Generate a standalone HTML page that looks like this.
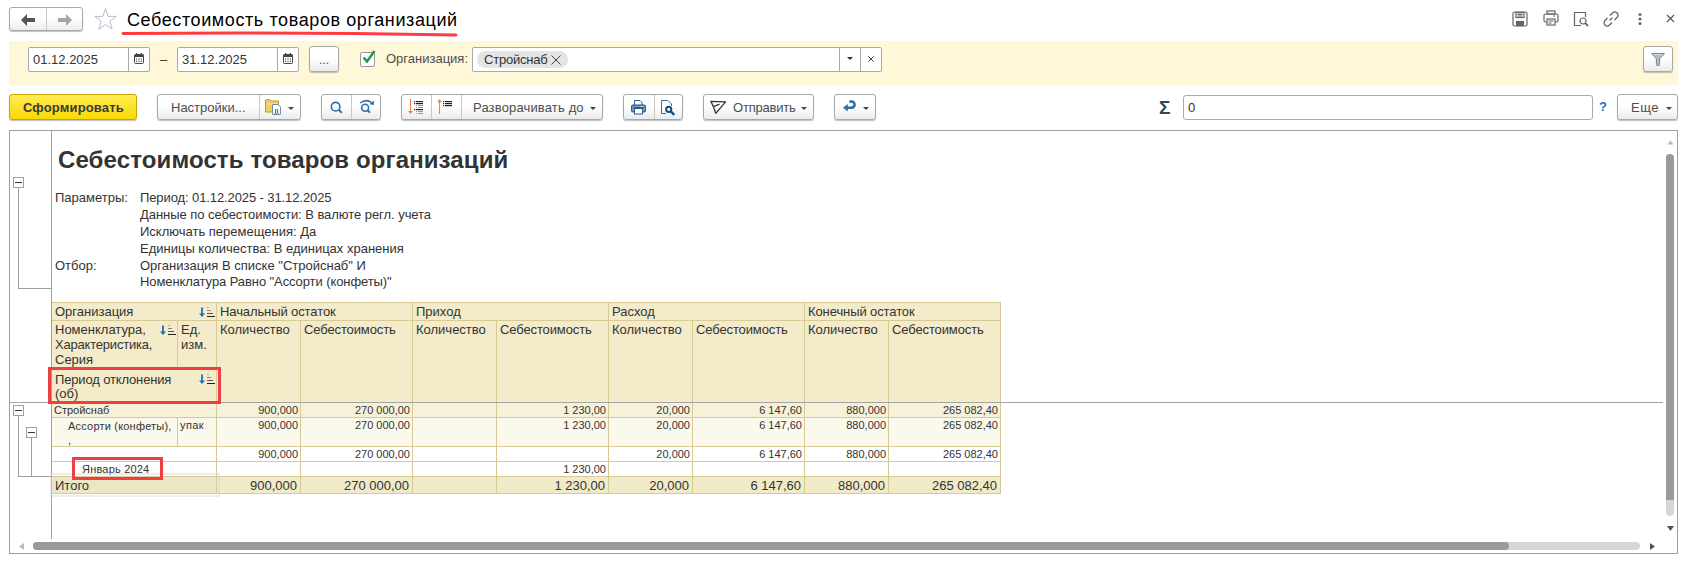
<!DOCTYPE html>
<html><head><meta charset="utf-8">
<style>
*{box-sizing:border-box;margin:0;padding:0}
html,body{width:1688px;height:562px;overflow:hidden;background:#fff;font-family:"Liberation Sans",sans-serif;color:#333;position:relative}
.a{position:absolute}
.btn{position:absolute;border:1px solid #a8a8a8;border-radius:3px;background:linear-gradient(#fff,#fff 45%,#ececec);box-shadow:0 1px 1px rgba(0,0,0,.25);height:26px;top:94px}
.sep{position:absolute;top:0;bottom:0;width:1px;background:#c8c8c8}
.bt{position:absolute;font-size:13px;color:#4d4d4d;white-space:nowrap;top:5px}
.dd{position:absolute;width:0;height:0;border-left:3px solid transparent;border-right:3px solid transparent;border-top:3px solid #444}
.inp{position:absolute;border:1px solid #a9a9a9;border-radius:2px;background:#fff}
.t{position:absolute;white-space:nowrap}
.hl{position:absolute;background:#d8c99a}
</style></head><body>

<!-- top title bar -->
<div class="btn" style="left:9px;top:7px;width:74px;height:24px;border-radius:3px">
  <div class="sep" style="left:36px"></div>
  <svg class="a" style="left:11px;top:6px" width="15" height="12" viewBox="0 0 15 12"><path d="M0 6 L6 0 L6 4 L14 4 L14 8 L6 8 L6 12 Z" fill="#555"/></svg>
  <svg class="a" style="left:47px;top:6px" width="15" height="12" viewBox="0 0 15 12"><path d="M15 6 L9 0 L9 4 L1 4 L1 8 L9 8 L9 12 Z" fill="#a5a5a5"/></svg>
</div>
<svg class="a" style="left:94px;top:8px" width="24" height="23" viewBox="0 0 24 23"><path d="M11.5 0.8 L14.2 8.3 L22.2 8.4 L15.9 13.3 L18.1 21.2 L11.5 16.6 L4.9 21.2 L7.1 13.3 L0.8 8.4 L8.8 8.3 Z" fill="none" stroke="#b3bcc5" stroke-width="1"/></svg>
<div class="t" style="left:127px;top:10px;font-size:18px;color:#000;letter-spacing:0.6px">Себестоимость товаров организаций</div>
<svg class="a" style="left:120px;top:30px" width="340" height="8" viewBox="0 0 340 8"><path d="M3 3.5 Q170 2 336 5" stroke="#ff3b40" stroke-width="3" fill="none" stroke-linecap="round"/></svg>

<!-- top right icons -->
<svg class="a" style="left:1512px;top:11px" width="16" height="16" viewBox="0 0 16 16" fill="none" stroke="#666" stroke-width="1.2"><rect x="1" y="1" width="14" height="14" rx="1.5"/><rect x="4" y="1.5" width="8" height="5"/><path d="M5.5 3.3h5M5.5 5h5"/><rect x="4.5" y="10.5" width="7" height="4" fill="#666"/></svg>
<svg class="a" style="left:1543px;top:10px" width="16" height="16" viewBox="0 0 16 16" fill="none" stroke="#666" stroke-width="1.2"><rect x="4" y="1" width="8" height="3"/><rect x="1" y="4" width="14" height="8" rx="1.5"/><rect x="4" y="9" width="8" height="6" fill="#fff"/><path d="M5.5 11h5M5.5 13h3M10 6h2"/></svg>
<svg class="a" style="left:1573px;top:11px" width="16" height="16" viewBox="0 0 16 16" fill="none" stroke="#666" stroke-width="1.2"><path d="M8 14.5H1.5V1.5H12.5V6"/><circle cx="10" cy="10" r="3"/><path d="M12.2 12.2L15 15" stroke-width="1.8"/></svg>
<svg class="a" style="left:1603px;top:11px" width="16" height="16" viewBox="0 0 16 16" fill="none" stroke="#666" stroke-width="1.3"><path d="M6.5 9.5L9.5 6.5"/><path d="M7 4.5L9.5 2a2.5 2.5 0 0 1 4.5 4.5L11.5 9"/><path d="M9 11.5L6.5 14a2.5 2.5 0 0 1-4.5-4.5L4.5 7"/></svg>
<svg class="a" style="left:1637px;top:12px" width="6" height="14" viewBox="0 0 6 14" fill="#666"><circle cx="3" cy="2.5" r="1.5"/><circle cx="3" cy="7" r="1.5"/><circle cx="3" cy="11.5" r="1.5"/></svg>
<svg class="a" style="left:1666px;top:14px" width="9" height="9" viewBox="0 0 9 9" stroke="#555" stroke-width="1.2"><path d="M1 1L8 8M8 1L1 8"/></svg>

<!-- filter band -->
<div class="a" style="left:9px;top:41px;width:1669px;height:44px;background:#fef8d9"></div>
<div class="inp" style="left:28px;top:47px;width:122px;height:25px">
  <div class="t" style="left:4px;top:4px;font-size:13px;color:#333">01.12.2025</div>
  <div class="a" style="left:99px;top:0;bottom:0;width:1px;background:#a9a9a9"></div>
  <svg class="a" style="left:105px;top:5px" width="10" height="11" viewBox="0 0 10 11"><rect x="0.5" y="1.5" width="9" height="9" rx="1" fill="#fff" stroke="#444"/><rect x="0.5" y="1.5" width="9" height="2.5" fill="#444"/><rect x="2" y="0" width="1.2" height="2.5" fill="#444"/><rect x="6.8" y="0" width="1.2" height="2.5" fill="#444"/><rect x="2" y="5.5" width="1.2" height="1.2" fill="#555"/><rect x="4.4" y="5.5" width="1.2" height="1.2" fill="#555"/><rect x="6.8" y="5.5" width="1.2" height="1.2" fill="#555"/><rect x="2" y="7.8" width="1.2" height="1.2" fill="#555"/><rect x="4.4" y="7.8" width="1.2" height="1.2" fill="#555"/><rect x="6.8" y="7.8" width="1.2" height="1.2" fill="#555"/></svg>
</div>
<div class="t" style="left:160px;top:52px;font-size:13px;color:#333">–</div>
<div class="inp" style="left:177px;top:47px;width:122px;height:25px">
  <div class="t" style="left:4px;top:4px;font-size:13px;color:#333">31.12.2025</div>
  <div class="a" style="left:99px;top:0;bottom:0;width:1px;background:#a9a9a9"></div>
  <svg class="a" style="left:105px;top:5px" width="10" height="11" viewBox="0 0 10 11"><rect x="0.5" y="1.5" width="9" height="9" rx="1" fill="#fff" stroke="#444"/><rect x="0.5" y="1.5" width="9" height="2.5" fill="#444"/><rect x="2" y="0" width="1.2" height="2.5" fill="#444"/><rect x="6.8" y="0" width="1.2" height="2.5" fill="#444"/><rect x="2" y="5.5" width="1.2" height="1.2" fill="#555"/><rect x="4.4" y="5.5" width="1.2" height="1.2" fill="#555"/><rect x="6.8" y="5.5" width="1.2" height="1.2" fill="#555"/><rect x="2" y="7.8" width="1.2" height="1.2" fill="#555"/><rect x="4.4" y="7.8" width="1.2" height="1.2" fill="#555"/><rect x="6.8" y="7.8" width="1.2" height="1.2" fill="#555"/></svg>
</div>
<div class="btn" style="left:309px;top:46px;width:30px;height:26px"><div class="bt" style="left:9px;top:6px;font-size:12px">...</div></div>
<div class="a" style="left:360px;top:52px;width:15px;height:15px;border:1px solid #999;border-radius:2px;background:#fff"></div>
<svg class="a" style="left:361px;top:49px" width="16" height="16" viewBox="0 0 16 16"><path d="M2.5 8.5L6 12.5L13.5 2" stroke="#1a9b4a" stroke-width="2.4" fill="none"/></svg>
<div class="t" style="left:386px;top:51px;font-size:13px;color:#4d4d4d">Организация:</div>
<div class="inp" style="left:472px;top:47px;width:410px;height:25px">
  <div class="a" style="left:4px;top:3px;width:91px;height:17px;border-radius:9px;background:#e4e4e4"></div>
  <div class="t" style="left:11px;top:4px;font-size:13px;color:#333;letter-spacing:-0.2px">Стройснаб</div>
  <svg class="a" style="left:78px;top:7px" width="10" height="10" viewBox="0 0 10 10" stroke="#444" stroke-width="1"><path d="M0.5 0.5L9.5 9.5M9.5 0.5L0.5 9.5"/></svg>
  <div class="a" style="left:366px;top:0;bottom:0;width:1px;background:#a9a9a9"></div>
  <div class="a" style="left:387px;top:0;bottom:0;width:1px;background:#a9a9a9"></div>
  <div class="dd" style="left:374px;top:9px;border-top-color:#333"></div>
  <svg class="a" style="left:395px;top:8px" width="6" height="6" viewBox="0 0 6 6" stroke="#444" stroke-width="1"><path d="M0.3 0.3L5.7 5.7M5.7 0.3L0.3 5.7"/></svg>
</div>
<div class="btn" style="left:1643px;top:46px;width:30px;height:26px">
  <svg class="a" style="left:7px;top:6px" width="14" height="13" viewBox="0 0 14 13"><path d="M0.5 0.5H13.5L8.6 5.8V11.2A1.6 1.6 0 0 1 5.4 11.2V5.8Z" fill="#b4bec8" stroke="#7b8794" stroke-width="1"/><path d="M2 1.5H12" stroke="#d5dbe0"/></svg>
</div>

<!-- toolbar -->
<div class="a" style="left:9px;top:94px;width:128px;height:26px;border:1px solid #c4a600;border-radius:3px;background:linear-gradient(#ffec55,#f9d900);box-shadow:0 1px 1px rgba(0,0,0,.25)">
  <div class="t" style="left:13px;top:5px;font-size:13px;font-weight:bold;color:#3a3a3a;letter-spacing:0.15px">Сформировать</div>
</div>
<div class="btn" style="left:157px;width:144px">
  <div class="bt" style="left:13px">Настройки...</div>
  <div class="sep" style="left:101px"></div>
  <svg class="a" style="left:106px;top:3px" width="20" height="18" viewBox="0 0 20 18"><path d="M1.5 14V2.8Q1.5 1.5 2.8 1.5H5.5L7 3H14.5V14Z" fill="#f2cd68" stroke="#c9962a"/><path d="M2.5 6H13.5" stroke="#f8e3a6"/><path d="M8.5 6.5H14L16.5 9V16Q16.5 16.5 16 16.5H9Q8.5 16.5 8.5 16Z" fill="#fff" stroke="#6d8aa6"/><rect x="11" y="11" width="1.2" height="4" fill="#e03a3a"/><rect x="13" y="11" width="1.2" height="4" fill="#3aa64a"/><path d="M10 15.5H15" stroke="#aaa"/></svg>
  <div class="dd" style="left:130px;top:12px"></div>
</div>
<div class="btn" style="left:321px;width:60px">
  <div class="sep" style="left:29px"></div>
  <svg class="a" style="left:7px;top:5px" width="14" height="14" viewBox="0 0 14 14"><circle cx="6.6" cy="6.7" r="4.3" fill="none" stroke="#2a6fa8" stroke-width="1.6"/><path d="M9.7 9.8L12.8 12.9" stroke="#2a6fa8" stroke-width="2"/></svg>
  <svg class="a" style="left:36px;top:3px" width="17" height="16" viewBox="0 0 17 16"><circle cx="7.1" cy="9.8" r="3.5" fill="none" stroke="#2a6fa8" stroke-width="1.6"/><path d="M9.6 12.3L12 14.6" stroke="#2a6fa8" stroke-width="2"/><path d="M2.2 5Q8 0.5 13.5 4.5" fill="none" stroke="#2a6fa8" stroke-width="1.5"/><path d="M15.8 2.5V7L11.5 6.2Z" fill="#2a6fa8"/></svg>
</div>
<div class="btn" style="left:401px;width:202px">
  <div class="sep" style="left:29px"></div>
  <div class="sep" style="left:59px"></div>
  <svg class="a" style="left:6px;top:4px" width="16" height="16" viewBox="0 0 16 16"><path d="M2.5 0v12.5" stroke="#f0824a" stroke-width="1.1"/><path d="M0 12H5L2.5 15Z" fill="#f0824a"/><g fill="#222"><rect x="6" y="2" width="1.2" height="1.2"/><rect x="8" y="2" width="7" height="1.2"/><rect x="6" y="4" width="1.2" height="1.2"/><rect x="8" y="4" width="7" height="1.2"/><rect x="6" y="10" width="1.2" height="1.2"/><rect x="8" y="10" width="7" height="1.2"/></g><g fill="#999"><rect x="8" y="6" width="1" height="1"/><rect x="10" y="6" width="5" height="1"/><rect x="8" y="8" width="1" height="1"/><rect x="10" y="8" width="5" height="1"/><rect x="8" y="12" width="1" height="1"/><rect x="10" y="12" width="5" height="1"/><rect x="8" y="14" width="1" height="1"/><rect x="10" y="14" width="5" height="1"/></g></svg>
  <svg class="a" style="left:35px;top:4px" width="16" height="16" viewBox="0 0 16 16"><path d="M2.5 2.5V15" stroke="#f0824a" stroke-width="1.1"/><path d="M0 3.2H5L2.5 0Z" fill="#f0824a"/><g fill="#222"><rect x="6" y="2" width="1.2" height="1.2"/><rect x="8" y="2" width="7" height="1.2"/><rect x="6" y="4" width="1.2" height="1.2"/><rect x="8" y="4" width="7" height="1.2"/><rect x="6" y="6" width="1.2" height="1.2"/><rect x="8" y="6" width="7" height="1.2"/></g></svg>
  <div class="bt" style="left:71px;letter-spacing:0.15px">Разворачивать до</div>
  <div class="dd" style="left:188px;top:12px"></div>
</div>
<div class="btn" style="left:623px;width:60px">
  <div class="sep" style="left:30px"></div>
  <svg class="a" style="left:7px;top:5px" width="15" height="15" viewBox="0 0 15 15"><path d="M3.5 5V0.5H9L11 2.5V5" fill="#fff" stroke="#2b5a85"/><rect x="0.6" y="5.1" width="13.8" height="6.8" rx="1.5" fill="#7fa3cc" stroke="#2b5a85" stroke-width="1.2"/><path d="M2 7.5H13" stroke="#2b5a85"/><rect x="9.5" y="6" width="1" height="1" fill="#fff"/><rect x="11.5" y="6" width="1" height="1" fill="#fff"/><rect x="3.5" y="8.5" width="8" height="5.5" fill="#fff" stroke="#2b5a85"/></svg>
  <svg class="a" style="left:37px;top:5px" width="16" height="16" viewBox="0 0 16 16"><path d="M5 13.5H0.5V0.5H7L10.5 4V6" fill="none" stroke="#4a6b8a"/><circle cx="7.7" cy="9.3" r="2.6" fill="#fff" stroke="#0f4f80" stroke-width="2"/><path d="M9.6 11.2L13.2 14.8" stroke="#0f4f80" stroke-width="2.4"/></svg>
</div>
<div class="btn" style="left:703px;width:111px">
  <svg class="a" style="left:6px;top:5px" width="17" height="15" viewBox="0 0 17 15"><path d="M0.8 1.3L15.5 1.9L5.8 13.3L3.4 6.6Z M3.4 6.6L9.6 4.2" fill="none" stroke="#333" stroke-width="1.3" stroke-linejoin="round"/></svg>
  <div class="bt" style="left:29px;letter-spacing:-0.2px">Отправить</div>
  <div class="dd" style="left:97px;top:12px"></div>
</div>
<div class="btn" style="left:834px;width:42px">
  <svg class="a" style="left:7px;top:5px" width="15" height="14" viewBox="0 0 15 14"><path d="M1 7.7L5.8 4V11.5Z" fill="#2a6fa8"/><path d="M5.2 7.7H9.5A3.1 3.1 0 0 0 9.5 1.5H7.3" fill="none" stroke="#2a6fa8" stroke-width="2.6"/></svg>
  <div class="dd" style="left:28px;top:12px"></div>
</div>

<div class="t" style="left:1159px;top:97px;font-size:19px;font-weight:bold;color:#2f4656">Σ</div>
<div class="inp" style="left:1183px;top:95px;width:410px;height:25px;border-radius:3px">
  <div class="t" style="left:4px;top:4px;font-size:13px;color:#333">0</div>
</div>
<div class="t" style="left:1599px;top:99px;font-size:13px;font-weight:bold;color:#1c72bd">?</div>
<div class="btn" style="left:1617px;width:61px">
  <div class="bt" style="left:13px;letter-spacing:0.5px">Еще</div>
  <div class="dd" style="left:48px;top:12px"></div>
</div>

<!-- report frame -->
<div class="a" style="left:9px;top:130px;width:1669px;height:424px;border:1px solid #a0a0a0"></div>
<div class="a" style="left:51px;top:131px;width:1px;height:408px;background:#a0a0a0"></div>

<!-- report content -->
<div class="t" style="left:58px;top:146px;font-size:24px;font-weight:bold;color:#333;letter-spacing:0.12px">Себестоимость товаров организаций</div>
<div class="a" style="left:13px;top:177px;width:11px;height:11px;border:1px solid #a0a0a0;background:#fff"></div>
<div class="a" style="left:15px;top:182px;width:7px;height:1px;background:#333"></div>
<div class="a" style="left:18px;top:188px;width:1px;height:101px;background:#a0a0a0"></div>
<div class="a" style="left:18px;top:288px;width:33px;height:1px;background:#a0a0a0"></div>
<div class="params" style="position:absolute;left:0;top:0;font-size:13px;color:#333">
<div class="t" style="left:55px;top:190px">Параметры:</div>
<div class="t" style="left:140px;top:190px;letter-spacing:-0.1px">Период: 01.12.2025 - 31.12.2025</div>
<div class="t" style="left:140px;top:207px;letter-spacing:-0.05px">Данные по себестоимости: В валюте регл. учета</div>
<div class="t" style="left:140px;top:224px">Исключать перемещения: Да</div>
<div class="t" style="left:140px;top:241px">Единицы количества: В единицах хранения</div>
<div class="t" style="left:55px;top:258px">Отбор:</div>
<div class="t" style="left:140px;top:258px">Организация В списке "Стройснаб" И</div>
<div class="t" style="left:140px;top:274px;letter-spacing:-0.09px">Номенклатура Равно "Ассорти (конфеты)"</div>
</div>
<div class="a" style="left:52px;top:302px;width:949px;height:100px;background:#f3ebc9;"></div>
<div class="a" style="left:52px;top:402px;width:949px;height:15px;background:#f7f1da;"></div>
<div class="a" style="left:52px;top:417px;width:949px;height:29px;background:#fbf8ec;"></div>
<div class="a" style="left:52px;top:476px;width:949px;height:17px;background:#f1eac8;"></div>
<div class="a" style="left:52px;top:476px;width:164px;height:17px;background:#ede6c5;"></div>
<div class="a" style="left:52px;top:302px;width:949px;height:1px;background:#d8ca95;"></div>
<div class="a" style="left:52px;top:320px;width:949px;height:1px;background:#d8ca95;"></div>
<div class="a" style="left:52px;top:368px;width:165px;height:1px;background:#d8ca95;"></div>
<div class="a" style="left:52px;top:417px;width:949px;height:1px;background:#d8ca95;"></div>
<div class="a" style="left:52px;top:446px;width:949px;height:1px;background:#d8ca95;"></div>
<div class="a" style="left:52px;top:461px;width:949px;height:1px;background:#d8ca95;"></div>
<div class="a" style="left:52px;top:476px;width:949px;height:1px;background:#d8ca95;"></div>
<div class="a" style="left:52px;top:493px;width:949px;height:1px;background:#d8ca95;"></div>
<div class="a" style="left:216px;top:302px;width:1px;height:191px;background:#d8ca95;"></div>
<div class="a" style="left:412px;top:302px;width:1px;height:191px;background:#d8ca95;"></div>
<div class="a" style="left:608px;top:302px;width:1px;height:191px;background:#d8ca95;"></div>
<div class="a" style="left:804px;top:302px;width:1px;height:191px;background:#d8ca95;"></div>
<div class="a" style="left:1000px;top:302px;width:1px;height:191px;background:#d8ca95;"></div>
<div class="a" style="left:300px;top:320px;width:1px;height:173px;background:#d8ca95;"></div>
<div class="a" style="left:496px;top:320px;width:1px;height:173px;background:#d8ca95;"></div>
<div class="a" style="left:692px;top:320px;width:1px;height:173px;background:#d8ca95;"></div>
<div class="a" style="left:888px;top:320px;width:1px;height:173px;background:#d8ca95;"></div>
<div class="a" style="left:177px;top:320px;width:1px;height:48px;background:#d8ca95;"></div>
<div class="a" style="left:177px;top:417px;width:1px;height:29px;background:#d8ca95;"></div>
<div class="t" style="left:55px;top:304px;font-size:13px;color:#333;">Организация</div>
<svg class="a" style="left:199px;top:307px" width="17" height="11" viewBox="0 0 17 11"><path d="M3 0.5V7" stroke="#1a6fc0" stroke-width="1.8"/><path d="M0 6.5H6L3 10Z" fill="#1a6fc0"/><path d="M8 0.5h2" stroke="#aaa"/><path d="M8 3.5h4" stroke="#888"/><path d="M8 6.5h6" stroke="#555"/><path d="M8 9.5h8" stroke="#222"/></svg>
<div class="t" style="left:220px;top:304px;font-size:13px;color:#333;letter-spacing:-0.1px">Начальный остаток</div>
<div class="t" style="left:220px;top:322px;font-size:13px;color:#333;">Количество</div>
<div class="t" style="left:304px;top:322px;font-size:13px;color:#333;letter-spacing:-0.12px">Себестоимость</div>
<div class="t" style="left:416px;top:304px;font-size:13px;color:#333;">Приход</div>
<div class="t" style="left:416px;top:322px;font-size:13px;color:#333;">Количество</div>
<div class="t" style="left:500px;top:322px;font-size:13px;color:#333;letter-spacing:-0.12px">Себестоимость</div>
<div class="t" style="left:612px;top:304px;font-size:13px;color:#333;">Расход</div>
<div class="t" style="left:612px;top:322px;font-size:13px;color:#333;">Количество</div>
<div class="t" style="left:696px;top:322px;font-size:13px;color:#333;letter-spacing:-0.12px">Себестоимость</div>
<div class="t" style="left:808px;top:304px;font-size:13px;color:#333;letter-spacing:-0.1px">Конечный остаток</div>
<div class="t" style="left:808px;top:322px;font-size:13px;color:#333;">Количество</div>
<div class="t" style="left:892px;top:322px;font-size:13px;color:#333;letter-spacing:-0.12px">Себестоимость</div>
<div class="t" style="left:55px;top:322px;font-size:13px;color:#333;">Номенклатура,</div>
<div class="t" style="left:55px;top:337px;font-size:13px;color:#333;letter-spacing:-0.2px">Характеристика,</div>
<div class="t" style="left:55px;top:352px;font-size:13px;color:#333;">Серия</div>
<svg class="a" style="left:160px;top:325px" width="17" height="11" viewBox="0 0 17 11"><path d="M3 0.5V7" stroke="#1a6fc0" stroke-width="1.8"/><path d="M0 6.5H6L3 10Z" fill="#1a6fc0"/><path d="M8 0.5h2" stroke="#aaa"/><path d="M8 3.5h4" stroke="#888"/><path d="M8 6.5h6" stroke="#555"/><path d="M8 9.5h8" stroke="#222"/></svg>
<div class="t" style="left:181px;top:322px;font-size:13px;color:#333;line-height:15px">Ед.<br>изм.</div>
<div class="t" style="left:55px;top:372px;font-size:13px;color:#333;letter-spacing:-0.15px">Период отклонения</div>
<div class="t" style="left:55px;top:386px;font-size:13px;color:#333;">(об)</div>
<svg class="a" style="left:199px;top:374px" width="17" height="11" viewBox="0 0 17 11"><path d="M3 0.5V7" stroke="#1a6fc0" stroke-width="1.8"/><path d="M0 6.5H6L3 10Z" fill="#1a6fc0"/><path d="M8 0.5h2" stroke="#aaa"/><path d="M8 3.5h4" stroke="#888"/><path d="M8 6.5h6" stroke="#555"/><path d="M8 9.5h8" stroke="#222"/></svg>
<div class="t" style="right:1390px;top:404px;font-size:11px;color:#333;text-align:right;">900,000</div>
<div class="t" style="right:1278px;top:404px;font-size:11px;color:#333;text-align:right;">270 000,00</div>
<div class="t" style="right:1082px;top:404px;font-size:11px;color:#333;text-align:right;">1 230,00</div>
<div class="t" style="right:998px;top:404px;font-size:11px;color:#333;text-align:right;">20,000</div>
<div class="t" style="right:886px;top:404px;font-size:11px;color:#333;text-align:right;">6 147,60</div>
<div class="t" style="right:802px;top:404px;font-size:11px;color:#333;text-align:right;">880,000</div>
<div class="t" style="right:690px;top:404px;font-size:11px;color:#333;text-align:right;">265 082,40</div>
<div class="t" style="right:1390px;top:419px;font-size:11px;color:#333;text-align:right;">900,000</div>
<div class="t" style="right:1278px;top:419px;font-size:11px;color:#333;text-align:right;">270 000,00</div>
<div class="t" style="right:1082px;top:419px;font-size:11px;color:#333;text-align:right;">1 230,00</div>
<div class="t" style="right:998px;top:419px;font-size:11px;color:#333;text-align:right;">20,000</div>
<div class="t" style="right:886px;top:419px;font-size:11px;color:#333;text-align:right;">6 147,60</div>
<div class="t" style="right:802px;top:419px;font-size:11px;color:#333;text-align:right;">880,000</div>
<div class="t" style="right:690px;top:419px;font-size:11px;color:#333;text-align:right;">265 082,40</div>
<div class="t" style="right:1390px;top:448px;font-size:11px;color:#333;text-align:right;">900,000</div>
<div class="t" style="right:1278px;top:448px;font-size:11px;color:#333;text-align:right;">270 000,00</div>
<div class="t" style="right:998px;top:448px;font-size:11px;color:#333;text-align:right;">20,000</div>
<div class="t" style="right:886px;top:448px;font-size:11px;color:#333;text-align:right;">6 147,60</div>
<div class="t" style="right:802px;top:448px;font-size:11px;color:#333;text-align:right;">880,000</div>
<div class="t" style="right:690px;top:448px;font-size:11px;color:#333;text-align:right;">265 082,40</div>
<div class="t" style="right:1082px;top:463px;font-size:11px;color:#333;text-align:right;">1 230,00</div>
<div class="t" style="left:54px;top:404px;font-size:11px;color:#333;">Стройснаб</div>
<div class="t" style="left:68px;top:419px;font-size:11px;color:#333;line-height:14px;letter-spacing:0.2px">Ассорти (конфеты),<br>,</div>
<div class="t" style="left:180px;top:419px;font-size:11px;color:#333;letter-spacing:0.4px">упак</div>
<div class="t" style="left:82px;top:463px;font-size:11px;color:#333;letter-spacing:0.2px">Январь 2024</div>
<div class="t" style="left:55px;top:478px;font-size:13px;color:#333;">Итого</div>
<div class="t" style="right:1391px;top:478px;font-size:13px;color:#333;text-align:right;">900,000</div>
<div class="t" style="right:1279px;top:478px;font-size:13px;color:#333;text-align:right;">270 000,00</div>
<div class="t" style="right:1083px;top:478px;font-size:13px;color:#333;text-align:right;">1 230,00</div>
<div class="t" style="right:999px;top:478px;font-size:13px;color:#333;text-align:right;">20,000</div>
<div class="t" style="right:887px;top:478px;font-size:13px;color:#333;text-align:right;">6 147,60</div>
<div class="t" style="right:803px;top:478px;font-size:13px;color:#333;text-align:right;">880,000</div>
<div class="t" style="right:691px;top:478px;font-size:13px;color:#333;text-align:right;">265 082,40</div>
<div class="a" style="left:50px;top:473px;width:170px;height:24px;background:transparent;border:2px solid rgba(215,215,220,0.45);box-sizing:border-box"></div>
<div class="a" style="left:9px;top:402px;width:1654px;height:1px;background:#a4a4a4;"></div>
<div class="a" style="left:13px;top:405px;width:11px;height:11px;background:#fff;border:1px solid #a0a0a0;box-sizing:border-box"></div>
<div class="a" style="left:15px;top:410px;width:7px;height:1px;background:#333;"></div>
<div class="a" style="left:18px;top:416px;width:1px;height:61px;background:#a0a0a0;"></div>
<div class="a" style="left:26px;top:427px;width:11px;height:11px;background:#fff;border:1px solid #a0a0a0;box-sizing:border-box"></div>
<div class="a" style="left:28px;top:432px;width:7px;height:1px;background:#333;"></div>
<div class="a" style="left:31px;top:438px;width:1px;height:39px;background:#a0a0a0;"></div>
<div class="a" style="left:18px;top:476px;width:33px;height:1px;background:#a0a0a0;"></div>
<div class="a" style="left:48px;top:367px;width:173px;height:37px;background:transparent;border:3px solid #ee3f43;box-sizing:border-box"></div>
<div class="a" style="left:72px;top:457px;width:91px;height:23px;background:transparent;border:3px solid #ee3f43;box-sizing:border-box"></div>
<div class="a" style="left:1666px;top:154px;width:8px;height:362px;background:#d6d6d6;border-radius:4px"></div>
<div class="a" style="left:1666px;top:154px;width:8px;height:346px;background:#9a9a9a;border-radius:4px 4px 0 0"></div>
<svg class="a" style="left:1667px;top:140px" width="7" height="5" viewBox="0 0 7 5"><path d="M0.5 4.5L3.5 0.5L6.5 4.5Z" fill="#b8b8b8"/></svg>
<svg class="a" style="left:1667px;top:526px" width="7" height="5" viewBox="0 0 7 5"><path d="M0 0L3.5 5L7 0Z" fill="#555"/></svg>
<div class="a" style="left:33px;top:542px;width:1607px;height:8px;background:#d6d6d6;border-radius:4px"></div>
<div class="a" style="left:33px;top:542px;width:1476px;height:8px;background:#9a9a9a;border-radius:4px"></div>
<svg class="a" style="left:19px;top:543px" width="5" height="7" viewBox="0 0 5 7"><path d="M5 0L0 3.5L5 7Z" fill="#bbb"/></svg>
<svg class="a" style="left:1650px;top:543px" width="5" height="7" viewBox="0 0 5 7"><path d="M0 0L5 3.5L0 7Z" fill="#555"/></svg>
</body></html>
